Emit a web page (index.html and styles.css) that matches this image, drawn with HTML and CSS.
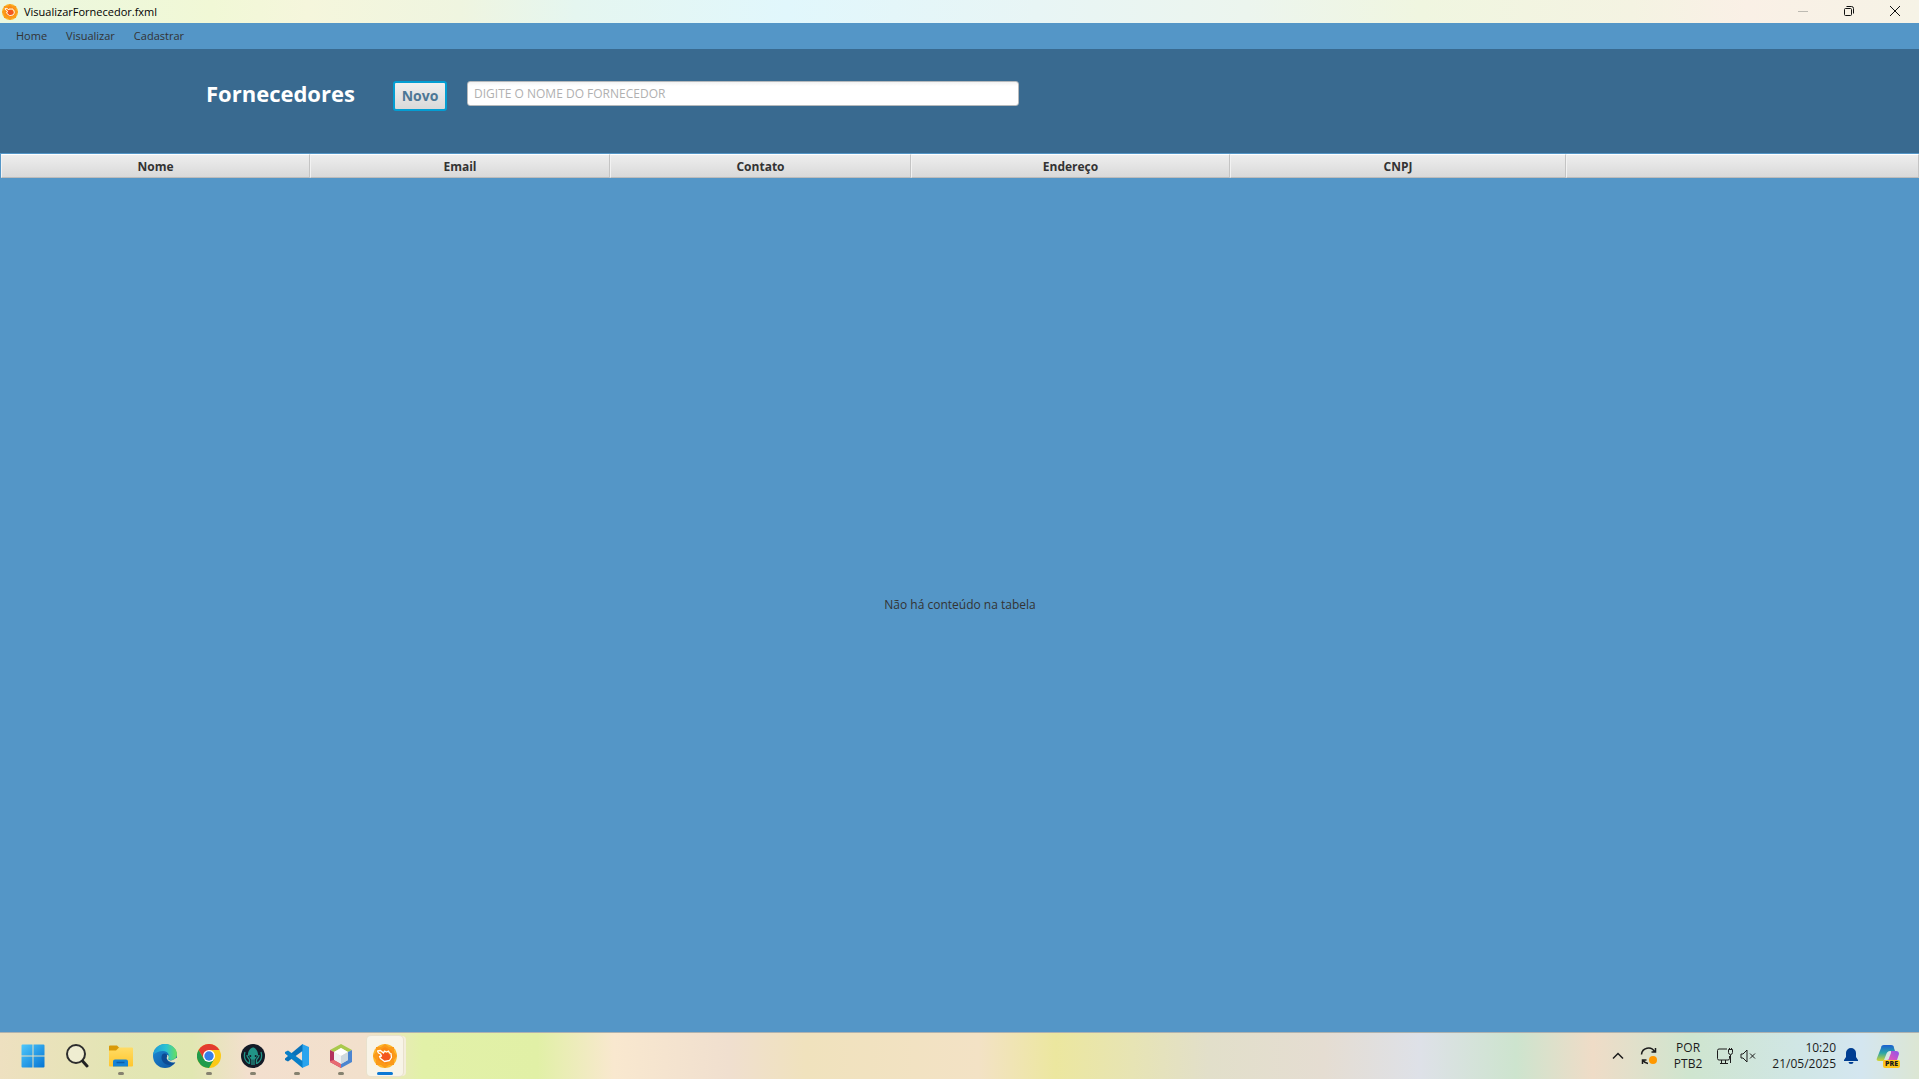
FILE: index.html
```html
<!DOCTYPE html>
<html lang="pt-BR">
<head>
<meta charset="utf-8">
<title>VisualizarFornecedor.fxml</title>
<link rel="stylesheet" href="styles.css">
</head>
<body>
<svg class="defs" aria-hidden="true">
  <defs>
    <linearGradient id="win" x1="0" y1="0" x2="1" y2="1"><stop offset="0" stop-color="#50c8fb"/><stop offset="1" stop-color="#0474d4"/></linearGradient>
    <linearGradient id="fold" x1="0" y1="0" x2="0" y2="1"><stop offset="0" stop-color="#ffdc65"/><stop offset="1" stop-color="#ffc62e"/></linearGradient>
    <linearGradient id="edgeTop" x1="0" y1="0" x2="1" y2="0"><stop offset="0" stop-color="#1c9ad8"/><stop offset=".55" stop-color="#2bc3d2"/><stop offset="1" stop-color="#69e05a"/></linearGradient>
    <linearGradient id="edgeLow" x1="0" y1="0" x2="1" y2="1"><stop offset="0" stop-color="#1d8fd8"/><stop offset="1" stop-color="#0c4f9c"/></linearGradient>
    <linearGradient id="copA" x1="0" y1="0" x2="0" y2="1"><stop offset="0" stop-color="#1b5fd0"/><stop offset=".5" stop-color="#2aa5a8"/><stop offset="1" stop-color="#d6d62e"/></linearGradient>
    <linearGradient id="copB" x1="1" y1="0" x2="0" y2="1"><stop offset="0" stop-color="#8a55ee"/><stop offset=".5" stop-color="#d553c0"/><stop offset="1" stop-color="#ff8a6b"/></linearGradient>
    <symbol id="scene" viewBox="0 0 24 24">
      <circle cx="12" cy="12" r="12" fill="#fdb52a"/>
      <path d="M12 0l4 3 5 0 0 5 3 4-3 4 0 5-5 0-4 3-4-3-5 0 0-5-3-4 3-4 0-5 5 0z" fill="#fb9a1a"/>
      <path d="M5 7l7-4 7 4 1 8-7 5-8-4z" fill="#fb8a12"/>
      <path d="M9 9l6 0 3 4-3 4-5 0-2-4z" fill="#f4571f"/>
      <path d="M4.500 7l3-.5 3 2.500 1-2 2 1 2-1 1 2 1.500.5.5 4-2 3-5 1-4-3-1-2 2-.5-1-2-2-1z" fill="none" stroke="#fff" stroke-width="1.300" stroke-linejoin="round"/>
    </symbol>
  </defs>
</svg>
<div class="window">
  <header class="titlebar">
    <svg class="app-icon" aria-hidden="true"><use href="#scene"/></svg>
    <span class="title">VisualizarFornecedor.fxml</span>
    <div class="window-controls">
      <button class="window-button" aria-label="Minimizar" disabled><svg viewBox="0 0 12 12"><path d="M1 6.500h10" stroke="#bdbab2"/></svg></button>
      <button class="window-button" aria-label="Restaurar"><svg viewBox="0 0 12 12"><rect x="1.500" y="3.500" width="7" height="7" rx="1"/><path d="M3.500 1.500h5a2 2 0 0 1 2 2v5"/></svg></button>
      <button class="window-button" aria-label="Fechar"><svg viewBox="0 0 12 12"><path d="M1 1l10 10M11 1L1 11"/></svg></button>
    </div>
  </header>
  <nav class="menu">
    <button>Home</button>
    <button>Visualizar</button>
    <button>Cadastrar</button>
  </nav>
  <section class="toolbar">
    <h1>Fornecedores</h1>
    <button class="new">Novo</button>
    <input class="search" type="text" placeholder="DIGITE O NOME DO FORNECEDOR" aria-label="Nome do fornecedor">
  </section>
  <main class="content">
    <table>
      <colgroup><col class="c1"><col class="c2"><col class="c3"><col class="c4"><col class="c5"><col></colgroup>
      <thead><tr><th>Nome</th><th>Email</th><th>Contato</th><th>Endereço</th><th>CNPJ</th><th aria-hidden="true"></th></tr></thead>
    </table>
    <p class="empty">Não há conteúdo na tabela</p>
  </main>
</div>
<footer class="taskbar">
  <div class="apps">
    <button class="app" aria-label="Iniciar"><svg viewBox="0 0 24 24"><path d="M.5 1.500a1 1 0 0 1 1-1h10v11H.5zM12.500.5h10a1 1 0 0 1 1 1v10h-11zM.5 12.500h11v11h-10a1 1 0 0 1-1-1zM12.500 12.500h11v10a1 1 0 0 1-1 1h-10z" fill="url(#win)"/></svg></button>
    <button class="app" aria-label="Pesquisar"><svg viewBox="0 0 24 24"><circle cx="11" cy="10" r="9" fill="#fff" fill-opacity=".35" stroke="#2d2d2d" stroke-width="2"/><path d="M17.500 17l4.500 5" stroke="#222" stroke-width="3" stroke-linecap="round"/></svg></button>
    <button class="app running" aria-label="Explorador de Arquivos"><svg viewBox="0 0 24 24"><path d="M0 2.500a1 1 0 0 1 1-1h7l3 3-2 3H0z" fill="#d99a08"/><path d="M0 6.500h7l3-3h13a1 1 0 0 1 1 1v17a1 1 0 0 1-1 1H1a1 1 0 0 1-1-1z" fill="url(#fold)"/><path d="M4 22.500v-5a2 2 0 0 1 2-2h11a2 2 0 0 1 2 2v5z" fill="#1583d5"/><path d="M7.500 18.500h8" stroke="#0b5ca8" stroke-width="1.500"/></svg></button>
    <button class="app" aria-label="Edge"><svg viewBox="0 0 24 24"><circle cx="12" cy="12" r="12" fill="url(#edgeLow)"/><path d="M0 11C1 4 6 0 12 0c7 0 12 5 12 10 0 4-3 6-6 6-2 0-4-1-3-2 2-3 0-7-5-7-4 0-8 2-10 4z" fill="url(#edgeTop)"/><path d="M9 11c-2 5 2 10 8 10 2 0 4-1 5-2-4 1-8-1-8-4 0-2 1-3 0-4-1-2-4-2-5 0z" fill="#0d4b93"/><path d="M14 15c-1-2 1-2 0-4 2 0 2 2 1 4 1 2 5 2 8-1l1.500 0-1 4c-4 1-8 0-9.500-3z" fill="#e4e6bf"/></svg></button>
    <button class="app running" aria-label="Chrome"><svg viewBox="0 0 24 24"><circle cx="12" cy="12" r="12" fill="#fbc916"/><path d="M1.600 6A12 12 0 0 1 22.400 6H12L6.800 15z" fill="#e33b2e"/><path d="M1.600 6A12 12 0 0 0 12 24l5.200-9H6.800z" fill="#219b4b"/><circle cx="12" cy="12" r="6" fill="#fff"/><circle cx="12" cy="12" r="4.700" fill="#367ee9"/></svg></button>
    <button class="app running" aria-label="GitKraken"><svg viewBox="0 0 24 24"><circle cx="12" cy="12" r="12" fill="#141a26"/><path d="M4 8c-1.500 5 0 9 4 11.500M20 8c1.500 5 0 9-4 11.500M6 11c0 3 2 3 2.500 5v4M18 11c0 3-2 3-2.500 5v4M11 14v7M13 14v7" fill="none" stroke="#219487" stroke-width="1.300"/><path d="M12 3.500c-3 0-5.500 5-5 8 1 1 2 2 3 4h4c1-2 2-3 3-4 .5-3-2-8-5-8z" fill="#219487"/><circle cx="9.300" cy="12" r="1" fill="#141a26"/><circle cx="14.700" cy="12" r="1" fill="#141a26"/></svg></button>
    <button class="app running" aria-label="Visual Studio Code"><svg viewBox="0 0 24 24"><path d="M17 0l7 3v18l-7 3z" fill="#2aa4ee"/><path d="M17.500 0v7L3 17.500 0 16v-1.500z" fill="#0a72b9"/><path d="M17.500 24v-7L3 6.500 0 8v1.500z" fill="#087fc8"/></svg></button>
    <button class="app running" aria-label="NetBeans"><svg viewBox="0 0 24 24"><path d="M12 0l11 6-4 2-7-4-7 4-4-2z" fill="#a9c94b"/><path d="M1 6l4 2v8l7 4v4L1 18z" fill="#b3325d"/><path d="M23 6l-4 2v8l-7 4v4l11-6z" fill="#4b85d0"/><path d="M5 8l7-4 7 4-7 4z" fill="#fff"/><path d="M5 8l7 4v8l-7-4z" fill="#eef1f2"/><path d="M19 8l-7 4v8l7-4z" fill="#cfd9df"/><path d="M1 17l4-1 7 4v4L1 18z" fill="#e76b72"/></svg></button>
    <button class="app running active" aria-label="VisualizarFornecedor"><svg viewBox="0 0 24 24"><use href="#scene"/></svg></button>
  </div>
  <div class="tray">
    <button class="chevron" aria-label="Mostrar ícones ocultos"><svg width="12" height="8" viewBox="0 0 12 8"><path d="M1 6.500l5-5 5 5" class="line bold"/></svg></button>
    <button class="update" aria-label="Atualização"><svg width="18" height="18" viewBox="0 0 18 18"><path d="M1.500 7.500a7 7 0 0 1 13-3M15.500 1v4h-4M8 16.500a7 7 0 0 1-5-3M2.500 17v-4h4" class="line bold"/><circle cx="13" cy="13" r="4" fill="#ff9800"/></svg></button>
    <div class="keyboard"><span>POR</span><span>PTB2</span></div>
    <button class="status" aria-label="Rede e som"><svg width="18" height="18" viewBox="0 0 18 18"><path d="M11 2H3a1.500 1.500 0 0 0-1.500 1.500v8A1.500 1.500 0 0 0 3 13h9a1.500 1.500 0 0 0 1.500-1.500V9M5.500 13v4M9.500 13v4M4 16.500h8M12.500 2.500h4v3a2 2 0 0 1-4 0zM14.500 8v8M13.500 2.500V1M15.500 2.500V1" class="line"/></svg><svg width="16" height="14" viewBox="0 0 16 14"><path d="M1 5h2l4-4v12L3 9H1zM10 4.500l5 5M15 4.500l-5 5" class="line"/></svg></button>
    <div class="clock"><time>10:20</time><span>21/05/2025</span></div>
    <button class="bell" aria-label="Notificações"><svg width="14" height="16" viewBox="0 0 14 16"><path d="M7 0a5 5 0 0 1 5 5v4l2 3v1H0v-1l2-3V5a5 5 0 0 1 5-5zM4.500 14h5a2.500 2 0 0 1-5 0z" fill="#003e92"/></svg></button>
    <button class="copilot" aria-label="Copilot"><svg width="24" height="24" viewBox="0 0 24 24"><path d="M8 1h7c2 0 3 1 3 3l1 3h-5c-2 0-3 1-4 4l-2 5c0 1-1 1-2 1H3c-2 0-3-1-2-3L5 4c0-2 1-3 3-3z" fill="url(#copA)"/><path d="M15 7h5c2 0 3 1 3 3l-3 9c-1 2-2 2-4 2H9c-2 0-2-1-2-2l1-3h3c1 0 2-1 2-2l2-5z" fill="url(#copB)"/></svg><span>PRE</span></button>
  </div>
</footer>
</body>
</html>
```
FILE: styles.css
```css
* { box-sizing: border-box; }
body {
  margin: 0;
  min-height: 100vh;
  display: flex;
  flex-direction: column;
  font: 12px/16px "Open Sans", "Noto Sans", sans-serif;
  color: #333;
  background: #5496c7;
}
button {
  margin: 0;
  padding: 0;
  border: 0;
  background: none;
  font: inherit;
  color: inherit;
}
.defs { position: absolute; width: 0; height: 0; }
.window { flex: 1; display: flex; flex-direction: column; }
.titlebar {
  display: flex;
  align-items: center;
  height: 23px;
  padding: 0 1px 0 2px;
  gap: 6px;
  font-size: 11px;
  color: #000;
  background: linear-gradient(90deg, #ebf7df 0, #f1f8d6 11%, #f5f6dc 16%, #eff5e0 24%, #e5f6f0 30%, #e1f7fc 41%, #e8f5f5 54%, #ecf5ee 65%, #f0f6e0 74%, #f4f3e2 85%, #faf0e6 91%, #f6f3e6 100%);
}
.app-icon { width: 16px; height: 16px; }
.window-controls { display: flex; margin-left: auto; height: 100%; padding-bottom: 2px; }
.window-button {
  width: 46px;
  display: flex;
  align-items: center;
  justify-content: center;
}
.window-button svg { width: 12px; height: 12px; fill: none; stroke: #111; }
.menu { display: flex; gap: 19px; height: 26px; padding-left: 16px; font-size: 11px; }
.toolbar {
  display: flex;
  align-items: flex-start;
  height: 104px;
  padding: 32px 0 0 206px;
  background: #396a90;
}
h1 {
  margin: 0;
  width: 187px;
  font-size: 22px;
  line-height: 24px;
  color: #fff;
}
.new {
  width: 54px;
  height: 30px;
  margin-right: 20px;
  border: 2px solid #039ed3;
  border-radius: 3px;
  background: linear-gradient(#efefef, #d9d9d9);
  font-weight: 700;
  font-size: 14px;
  color: #4c7796;
}
.search {
  width: 552px;
  height: 25px;
  padding: 0 6px;
  border: 1px solid #b5b9bc;
  border-radius: 3px;
  background: linear-gradient(#f2f2f2, #fff 4px);
  font: inherit;
}
.search::placeholder { color: #b0b0b0; opacity: 1; }
.content {
  flex: 1;
  display: flex;
  flex-direction: column;
  padding: 1px 0 0 1px;
}
table { width: 100%; table-layout: fixed; border-collapse: separate; border-spacing: 0; }
th {
  height: 24px;
  padding: 2px 0 0;
  border: 1px solid #fafafa;
  border-color: #fff #c4c4c4 #bcbcbc #f2f2f2;
  background: linear-gradient(#eee, #d9d9d9);
  font-weight: 700;
}
.c1 { width: 309px; }
.c2 { width: 300px; }
.c3 { width: 301px; }
.c4 { width: 319px; }
.c5 { width: 336px; }
.empty { margin: auto; }
.taskbar {
  display: flex;
  justify-content: space-between;
  height: 47px;
  padding: 0 19px 0 15px;
  border-top: 1px solid #aeb2b0;
  color: #1c1c1c;
  background: linear-gradient(90deg, #eee0c0 0, #e3e5b4 6%, #e1e7b2 10%, #f3dfce 13%, #f2e0cc 19%, #e2f1a8 22%, #e1f0a6 28%, #f9e8cf 32%, #f0dfcf 38%, #f0e2bd 42%, #f3e2c5 51%, #ece79f 55%, #e7e4b4 59%, #e2dfca 63%, #e5ddd2 69%, #dee1e8 74%, #cde4ce 79%, #efdcc7 83%, #cfe5cf 88%, #d0e6e6 94%, #d4e6f0 97%, #dce6d3 100%);
}
.apps, .tray { display: flex; align-items: center; }
.apps { gap: 8px; }
.app {
  position: relative;
  width: 36px;
  height: 40px;
  display: flex;
  align-items: center;
  justify-content: center;
  border-radius: 4px;
}
.app svg { width: 24px; height: 24px; }
.running::after {
  content: "";
  position: absolute;
  bottom: 1px;
  width: 6px;
  height: 3px;
  border-radius: 2px;
  background: #85816f;
}
.active { background: #f8f4e8; box-shadow: 0 0 0 1px #e9e1cd, 3px 0 0 0 #f4eedc; }
.active::after { width: 16px; background: #0b78d4; }
.line { fill: none; stroke: #1c1c1c; }
.bold { stroke-width: 1.5; }
.tray button, .tray svg { display: block; }
.chevron { margin-right: 16px; }
.update { margin-right: 16px; }
.keyboard { display: flex; flex-direction: column; align-items: center; margin-right: 14px; }
.tray .status { display: flex; align-items: center; gap: 6px; margin-right: 16px; }
.clock { display: flex; flex-direction: column; align-items: flex-end; margin-right: 8px; }
.bell { margin-right: 18px; }
.copilot { position: relative; }
.copilot span {
  position: absolute;
  right: 0;
  bottom: 0;
  padding: 0 2px;
  border-radius: 2px;
  background: #ffc61a;
  font-size: 7px;
  line-height: 8px;
  font-weight: 800;
}
```
